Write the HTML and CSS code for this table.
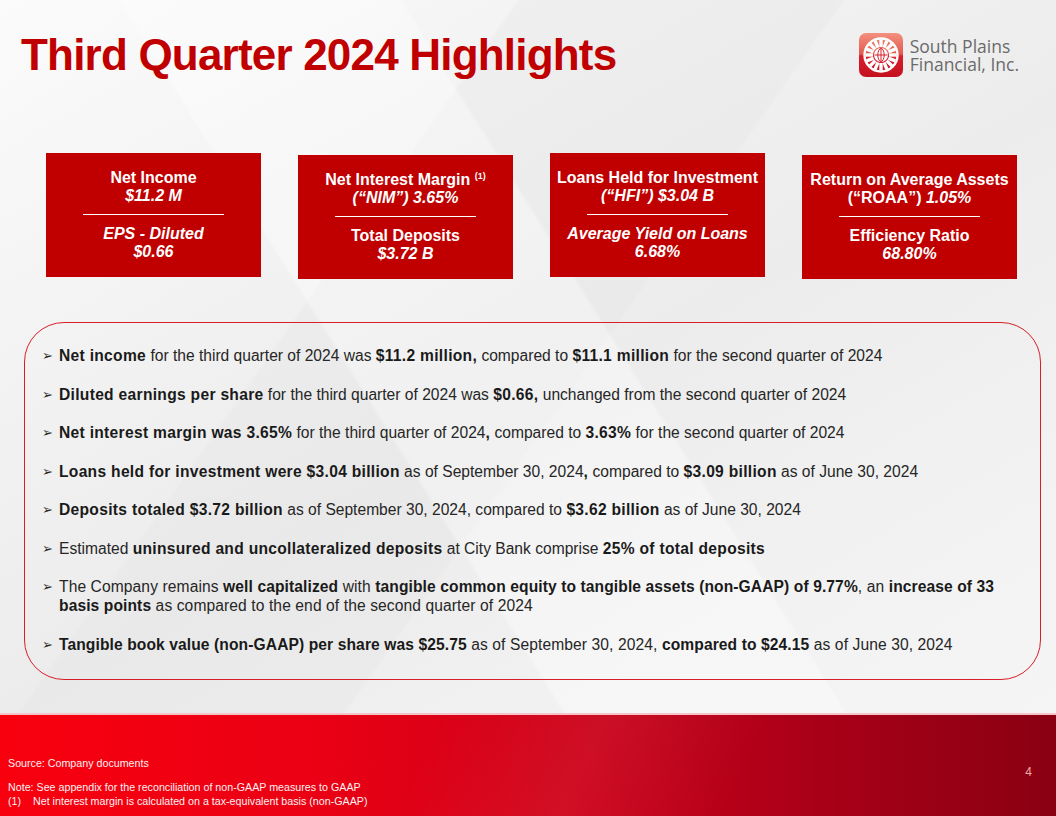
FILE: index.html
```html
<!DOCTYPE html>
<html>
<head>
<meta charset="utf-8">
<link rel="stylesheet" href="styles.css">
</head>
<body>
<div class="slide">
  <header class="top">
    <h1 class="title">Third Quarter 2024 Highlights</h1>
    <div class="logo">
      <svg class="logo-mark" width="44" height="44" viewBox="0 0 44 44">
        <defs>
          <linearGradient id="lg" x1="0" y1="0" x2="0" y2="1">
            <stop offset="0" stop-color="#f3907e"/>
            <stop offset="0.48" stop-color="#e25a50"/>
            <stop offset="0.52" stop-color="#d8202c"/>
            <stop offset="1" stop-color="#c4101e"/>
          </linearGradient>
        </defs>
        <rect x="0" y="0" width="44" height="44" rx="7" fill="url(#lg)"/>
        <circle cx="22" cy="22" r="16.5" fill="none" stroke="#fff" stroke-width="2.4"/>
        <g stroke="#fff" stroke-width="3.4" stroke-linecap="butt">
          <line x1="22" y1="6.5" x2="22" y2="14" transform="rotate(0 22 22)"/>
          <line x1="22" y1="6.5" x2="22" y2="14" transform="rotate(22.5 22 22)"/>
          <line x1="22" y1="6.5" x2="22" y2="14" transform="rotate(45 22 22)"/>
          <line x1="22" y1="6.5" x2="22" y2="14" transform="rotate(67.5 22 22)"/>
          <line x1="22" y1="6.5" x2="22" y2="14" transform="rotate(90 22 22)"/>
          <line x1="22" y1="6.5" x2="22" y2="14" transform="rotate(112.5 22 22)"/>
          <line x1="22" y1="6.5" x2="22" y2="14" transform="rotate(135 22 22)"/>
          <line x1="22" y1="6.5" x2="22" y2="14" transform="rotate(157.5 22 22)"/>
          <line x1="22" y1="6.5" x2="22" y2="14" transform="rotate(180 22 22)"/>
          <line x1="22" y1="6.5" x2="22" y2="14" transform="rotate(202.5 22 22)"/>
          <line x1="22" y1="6.5" x2="22" y2="14" transform="rotate(225 22 22)"/>
          <line x1="22" y1="6.5" x2="22" y2="14" transform="rotate(247.5 22 22)"/>
          <line x1="22" y1="6.5" x2="22" y2="14" transform="rotate(270 22 22)"/>
          <line x1="22" y1="6.5" x2="22" y2="14" transform="rotate(292.5 22 22)"/>
          <line x1="22" y1="6.5" x2="22" y2="14" transform="rotate(315 22 22)"/>
          <line x1="22" y1="6.5" x2="22" y2="14" transform="rotate(337.5 22 22)"/>
        </g>
        <circle cx="22" cy="22" r="7" fill="#fff"/>
        <g stroke="#d8202c" stroke-width="1" fill="none">
          <line x1="22" y1="15.5" x2="22" y2="28.5"/>
          <line x1="15.5" y1="22" x2="28.5" y2="22"/>
          <ellipse cx="22" cy="22" rx="3.2" ry="6.5"/>
        </g>
      </svg>
      <div class="logo-text">South Plains<br>Financial, Inc.</div>
    </div>
  </header>

  <section class="cards">
    <div class="card">
      <div class="blk"><div>Net Income</div><div class="it">$11.2 M</div></div>
      <div class="rule"></div>
      <div class="blk"><div class="it">EPS - Diluted</div><div class="it">$0.66</div></div>
    </div>
    <div class="card low">
      <div class="blk"><div>Net Interest Margin <sup>(1)</sup></div><div class="it">(“NIM”) 3.65%</div></div>
      <div class="rule"></div>
      <div class="blk"><div>Total Deposits</div><div class="it">$3.72 B</div></div>
    </div>
    <div class="card">
      <div class="blk"><div>Loans Held for Investment</div><div class="it">(“HFI”) $3.04 B</div></div>
      <div class="rule"></div>
      <div class="blk"><div class="it">Average Yield on Loans</div><div class="it">6.68%</div></div>
    </div>
    <div class="card low">
      <div class="blk"><div>Return on Average Assets</div><div>(“ROAA”) <span class="it">1.05%</span></div></div>
      <div class="rule"></div>
      <div class="blk"><div>Efficiency Ratio</div><div class="it">68.80%</div></div>
    </div>
  </section>

  <section class="box">
    <ul class="list">
      <li><b>Net income</b> for the third quarter of 2024 was <b>$11.2 million,</b> compared to <b>$11.1 million</b> for the second quarter of 2024</li>
      <li><b>Diluted earnings per share</b> for the third quarter of 2024 was <b>$0.66,</b> unchanged from the second quarter of 2024</li>
      <li><b>Net interest margin was 3.65%</b> for the third quarter of 2024<b>,</b> compared to <b>3.63%</b> for the second quarter of 2024</li>
      <li><b>Loans held for investment were $3.04 billion</b> as of September 30, 2024<b>,</b> compared to <b>$3.09 billion</b> as of June 30, 2024</li>
      <li><b>Deposits totaled $3.72 billion</b> as of September 30, 2024, compared to <b>$3.62 billion</b> as of June 30, 2024</li>
      <li>Estimated <b>uninsured and uncollateralized deposits</b> at City Bank comprise <b>25% of total deposits</b></li>
      <li class="cond">The Company remains <b>well capitalized</b> with <b>tangible common equity to tangible assets (non-GAAP) of 9.77%</b>, an <b>increase of 33 basis points</b> as compared to the end of the second quarter of 2024</li>
      <li class="cond"><b>Tangible book value (non-GAAP) per share was $25.75</b> as of September 30, 2024, <b>compared to $24.15</b> as of June 30, 2024</li>
    </ul>
  </section>

  <footer class="foot">
    <div class="notes">
      <div>Source: Company documents</div>
      <div class="note">Note: See appendix for the reconciliation of non-GAAP measures to GAAP</div>
      <div class="fn"><span class="fn-num">(1)</span>Net interest margin is calculated on a tax-equivalent basis (non-GAAP)</div>
    </div>
    <div class="page">4</div>
  </footer>
</div>
</body>
</html>
```

FILE: styles.css
```css
html, body {
  margin: 0;
  padding: 0;
}
body {
  font-family: "Liberation Sans", Arial, sans-serif;
}
.slide {
  width: 1056px;
  height: 816px;
  display: flex;
  flex-direction: column;
  overflow: hidden;
  background:
    linear-gradient(58deg, rgba(255,255,255,0) 0%, rgba(255,255,255,0) 40%, rgba(255,255,255,0.35) 40.3%, rgba(255,255,255,0.35) 58%, rgba(255,255,255,0) 58.3%),
    linear-gradient(-55deg, rgba(228,228,228,0) 0%, rgba(228,228,228,0) 48%, rgba(226,226,226,0.3) 48.3%, rgba(226,226,226,0.3) 68%, rgba(228,228,228,0) 68.3%),
    linear-gradient(150deg, #fbfbfb 0%, #f3f3f3 25%, #ececec 50%, #f2f2f2 75%, #f6f6f6 100%);
}
.top {
  display: flex;
  justify-content: space-between;
  align-items: center;
  padding: 30px 37px 0 21px;
}
.title {
  margin: 0;
  font-size: 44px;
  line-height: 50px;
  font-weight: bold;
  letter-spacing: -0.8px;
  color: #c00000;
}
.logo {
  display: flex;
  align-items: center;
  gap: 7px;
}
.logo-mark {
  display: block;
}
.logo-text {
  font-family: "Open Sans", "Noto Sans", sans-serif;
  font-size: 17.5px;
  line-height: 18px;
  color: #6a6a6a;
}
.cards {
  display: flex;
  gap: 37px;
  padding-left: 46px;
  margin-top: 73px;
  align-items: flex-start;
}
.card {
  width: 215px;
  height: 124px;
  background: #c00000;
  color: #ffffff;
  font-weight: bold;
  font-size: 16px;
  line-height: 18px;
  text-align: center;
  display: flex;
  flex-direction: column;
  justify-content: center;
  align-items: center;
}
.card.low {
  margin-top: 2px;
}
.card sup {
  font-size: 9px;
  vertical-align: 6px;
  line-height: 0;
}
.it {
  font-style: italic;
}
.rule {
  width: 141px;
  height: 1px;
  background: #ffffff;
  margin: 9px 0 10px;
}
.box {
  margin: 43px 15px 0 24px;
  height: 358px;
  box-sizing: border-box;
  border: 1px solid #d81e28;
  border-radius: 40px;
  padding: 23px 20px 0 17px;
}
.list {
  list-style: none;
  margin: 0;
  padding: 0;
  display: flex;
  flex-direction: column;
  gap: 19.5px;
  color: #262626;
  font-size: 15.6px;
  line-height: 19px;
}
.list li {
  position: relative;
  padding-left: 17px;
}
.list li::before {
  content: "\27A2";
  font-family: "DejaVu Sans", sans-serif;
  position: absolute;
  left: 0;
  top: 0;
  font-size: 13px;
  color: #262626;
}
.list b {
  color: #1a1a1a;
  letter-spacing: 0.3px;
}
.list li.cond {
  letter-spacing: 0.1px;
}
.list li.cond b {
  letter-spacing: 0.1px;
}
.foot {
  margin-top: auto;
  height: 103px;
  box-sizing: border-box;
  border-top: 2px solid #f4c4c8;
  background:
    linear-gradient(115deg, rgba(255,255,255,0) 40%, rgba(255,255,255,0.06) 55%, rgba(255,255,255,0) 70%),
    linear-gradient(90deg, #f8000e 0%, #ea0014 30%, #cc0018 55%, #a80018 78%, #8a0012 100%);
  display: flex;
  justify-content: space-between;
  padding: 41px 24px 0 8px;
  color: #fdf0f0;
  font-size: 10.7px;
  line-height: 14px;
}
.note {
  margin-top: 10px;
}
.fn-num {
  display: inline-block;
  width: 25px;
}
.page {
  margin-top: 9px;
  font-size: 12px;
  color: #f4a8a8;
}
```
